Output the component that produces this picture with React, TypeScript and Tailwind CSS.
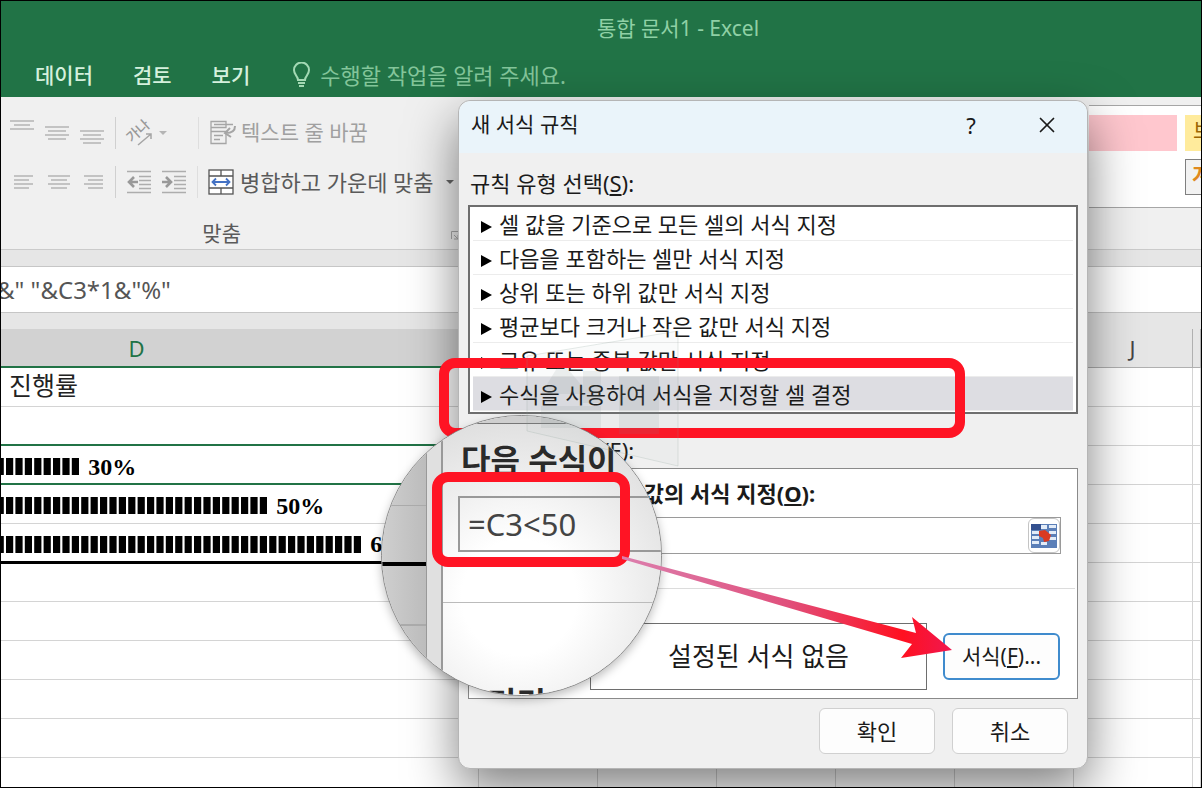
import type { ReactNode } from 'react';
import { X } from 'lucide-react';

const RULE_TYPES = [
  '셀 값을 기준으로 모든 셀의 서식 지정',
  '다음을 포함하는 셀만 서식 지정',
  '상위 또는 하위 값만 서식 지정',
  '평균보다 크거나 작은 값만 서식 지정',
  '고유 또는 중복 값만 서식 지정',
  '수식을 사용하여 서식을 지정할 셀 결정',
];

const TABS = ['데이터', '검토', '보기'];

const ROWS = [
  { label: '진행률', border: 'border-b border-b-[#d4d4d4]' },
  { border: 'border-b-2 border-b-[#217346]' },
  { bars: 8, text: '30%', border: 'border-b-2 border-b-[#217346]' },
  { bars: 28, text: '50%', border: 'border-b border-b-[#d4d4d4]' },
  { bars: 38, text: '60%', border: 'border-b-3 border-b-black' },
  { border: 'border-b border-b-[#d4d4d4]' },
  { border: 'border-b border-b-[#d4d4d4]' },
  { border: 'border-b border-b-[#d4d4d4]' },
  { border: 'border-b border-b-[#d4d4d4]' },
  { border: 'border-b border-b-[#d4d4d4]' },
  { border: '' },
];

const COLUMNS = ['E', 'F', 'G', 'H', 'I', 'J', ''];

function Lines({ rows, className }: { rows: [number, number, number][]; className?: string }) {
  return (
    <svg width="26" height="24" viewBox="0 0 26 24" className={className} stroke="#aaa" strokeWidth="1.3">
      {rows.map(([x1, x2, y]) => (
        <line key={y} x1={x1} x2={x2} y1={y} y2={y} />
      ))}
    </svg>
  );
}

function IconButton({ label, children }: { label: string; children: ReactNode }) {
  return (
    <button aria-label={label} className="flex shrink-0 items-center">
      {children}
    </button>
  );
}

function Indent({ flip }: { flip?: boolean }) {
  return (
    <svg width="26" height="24" viewBox="0 0 26 24" fill="none" stroke="#adadad" strokeWidth="1.3">
      <path d="M1 1.500h24M13 6.500h12M13 10.500h12M13 14.500h12M13 18.500h12M1 22.500h24" />
      {flip ? (
        <path d="M1 12h9M5 7l5 5-5 5" stroke="#999" strokeWidth="2.6" />
      ) : (
        <path d="M12 12H3M8 7l-5 5 5 5" stroke="#999" strokeWidth="2.6" />
      )}
    </svg>
  );
}

function Orientation() {
  return (
    <svg width="40" height="28" viewBox="0 0 40 28" fill="none" stroke="#a5a5a5" className="overflow-visible">
      <text x="12" y="17" transform="rotate(-42 12 12)" textAnchor="middle" fontSize="14" fontWeight="500" fill="#999" stroke="none">가나</text>
      <path d="M12 26L25 15M20 15h5v5" strokeWidth="1.5" />
      <path d="M33 12h8l-4 4z" fill="#b5b5b5" stroke="none" />
    </svg>
  );
}

function WrapIcon() {
  return (
    <svg width="28" height="26" viewBox="0 0 28 26" fill="none" stroke="#a5a5a5" strokeWidth="1.3">
      <path d="M2 1.500h15v6H2zM2 11.500h15v12H2zM2 7v5M5 4.500h19M5 15.500h9M5 19.500h6" />
      <path d="M26 6c0 5-3 7-9 7M21 8l-5 5 6 4" strokeWidth="2" />
    </svg>
  );
}

function MergeIcon() {
  return (
    <svg width="26" height="26" viewBox="0 0 26 26" fill="none" stroke="#555" strokeWidth="1.3">
      <rect x="1" y="1" width="24" height="24" fill="#fff" />
      <path d="M1 7h24M1 19h24M13 1v6M13 19v6" />
      <path d="M4 13h18M8 9.500L4.500 13 8 16.500M18 9.500l3.500 3.500-3.500 3.500" stroke="#4472c4" strokeWidth="1.8" />
    </svg>
  );
}

function Ribbon() {
  return (
    <section className="flex h-[153px] shrink-0 border-b border-[#cbcbcb] bg-[#f0f0f0]">
      <div className="flex w-[458px] shrink-0 flex-col text-[#5a5a5a]">
        <div className="flex h-[71px] items-center pl-2">
          <div className="flex gap-[9px]">
            <IconButton label="위쪽 맞춤">
              <Lines rows={[[1, 25, 6], [5, 21, 10], [1, 25, 14]]} className="mb-3" />
            </IconButton>
            <IconButton label="가운데 맞춤">
              <Lines rows={[[1, 25, 6], [4, 22, 10], [1, 25, 14], [4, 22, 18]]} />
            </IconButton>
            <IconButton label="아래쪽 맞춤">
              <Lines rows={[[1, 25, 6], [4, 22, 10], [1, 25, 14], [4, 22, 18]]} className="mt-2" />
            </IconButton>
          </div>
          <div className="ml-2.5 h-8 w-px bg-[#d0d0d0]" />
          <div className="ml-2.5">
            <IconButton label="방향"><Orientation /></IconButton>
          </div>
          <div className="ml-8 h-8 w-px bg-[#dedede]" />
          <button className="ml-2.5 flex items-center gap-1 text-[21px] text-[#a0a0a0]">
            <WrapIcon />텍스트 줄 바꿈
          </button>
        </div>
        <div className="flex h-7 items-center pl-3">
          <div className="flex gap-[9px]">
            <IconButton label="왼쪽 맞춤">
              <Lines rows={[[1, 20, 6], [1, 16, 10], [1, 20, 14], [1, 16, 18]]} />
            </IconButton>
            <IconButton label="중앙 맞춤">
              <Lines rows={[[0, 22, 6], [3, 19, 10], [0, 22, 14], [3, 19, 18]]} />
            </IconButton>
            <IconButton label="오른쪽 맞춤">
              <Lines rows={[[1, 20, 6], [5, 20, 10], [1, 20, 14], [5, 20, 18]]} />
            </IconButton>
          </div>
          <div className="ml-1.5 h-8 w-px bg-[#d0d0d0]" />
          <div className="ml-2.5 flex gap-[9px]">
            <IconButton label="내어쓰기"><Indent /></IconButton>
            <IconButton label="들여쓰기"><Indent flip /></IconButton>
          </div>
          <div className="ml-2.5 h-8 w-px bg-[#dedede]" />
          <button className="ml-2.5 flex items-center gap-1.5 text-[22px] whitespace-nowrap">
            <MergeIcon />병합하고 가운데 맞춤
            <svg width="8" height="4" viewBox="0 0 8 4" className="ml-1.5"><path d="M0 0h8L4 4z" fill="#666" /></svg>
          </button>
        </div>
        <div className="flex flex-1 items-end justify-end gap-[210px] pb-1">
          <span className="text-[21px] leading-6">맞춤</span>
          <svg width="8" height="10" viewBox="0 0 8 10" className="mb-1" fill="none" stroke="#aaa">
            <path d="M0.500 8V0.500H8M3 4l4 4M7 4v4H3" />
          </svg>
        </div>
      </div>
      <div className="mt-2 ml-auto flex h-[103px] w-28 flex-col gap-2 overflow-hidden border-y border-[#a6a6a6] bg-white pt-[9px]">
        <div className="flex gap-2">
          <div className="h-9 w-[88px] shrink-0 bg-[#ffc7ce]" />
          <div className="h-9 w-16 shrink-0 overflow-hidden bg-[#ffeb9c] pl-2 text-[21px] text-[#9c6500]">보통</div>
        </div>
        <div className="ml-24 h-9 w-16 overflow-hidden border border-[#7f7f7f] bg-[#f2f2f2] pl-1.5 text-[22px] leading-7 font-bold text-[#e08a1e]">계산</div>
      </div>
    </section>
  );
}

function Sheet() {
  return (
    <table className="w-full table-fixed border-collapse">
      <colgroup>
        <col className="w-[477px]" />
        {COLUMNS.slice(0, 6).map((c) => <col key={c} className="w-[119px]" />)}
        <col />
      </colgroup>
      <thead>
        <tr className="h-[38px] text-[22px] leading-7">
          <th className="border-b-2 border-[#217346] bg-[#d2d2d2] pr-[206px] font-normal text-[#217346]">D</th>
          {COLUMNS.map((c) => (
            <th key={c} className="border-r border-b border-[#b0b0b0] bg-[#e6e6e6] font-normal text-[#444]">{c}</th>
          ))}
        </tr>
      </thead>
      <tbody className="bg-white">
        {ROWS.map((row, i) => (
          <tr key={i} className="h-[39px]">
            <td className={`border-r border-r-[#d4d4d4] p-0 ${row.border}`}>
              {row.label && <span className="block pb-1 pl-2 text-[25px] leading-8 text-[#222]">{row.label}</span>}
              {row.bars && (
                <div className="flex items-center gap-2 pt-1">
                  <svg width={row.bars * 9.4 + 4} height="17" aria-hidden="true">
                    {Array.from({ length: row.bars + 1 }, (_, n) => (
                      <rect key={n} x={n * 9.4 - 4.4} width="7.2" height="17" />
                    ))}
                  </svg>
                  <span className="font-['Liberation_Serif',serif] text-2xl leading-8 font-black">{row.text}</span>
                </div>
              )}
            </td>
            {COLUMNS.map((c) => <td key={c} className="border-r border-b border-[#d4d4d4]" />)}
          </tr>
        ))}
      </tbody>
    </table>
  );
}

function RuleDialog() {
  return (
    <div
      role="dialog"
      aria-label="새 서식 규칙"
      className="absolute top-[99px] left-[457px] w-[630px] rounded-xl border border-[#b5b5b5] bg-[#f0f0f0] pb-3.5 text-[22px] text-[#1a1a1a] shadow-[0_20px_50px_0_rgba(0,0,0,0.5)]"
    >
      <header className="flex h-[52px] items-center rounded-t-xl bg-[#eaf4fa] pr-6 pb-1 pl-3">
        <h1 className="mr-auto text-[21px]">새 서식 규칙</h1>
        <button aria-label="도움말" className="mr-11 w-8">?</button>
        <button aria-label="닫기" className="flex w-8 justify-center"><X size={26} strokeWidth={1.6} /></button>
      </header>

      <div className="px-[9px]">
        <p id="rule-type" className="mt-3.5 mb-1.5 pl-0.5 leading-8">규칙 유형 선택(<u>S</u>):</p>
        <ul role="listbox" aria-labelledby="rule-type" className="border-2 border-[#6e6e6e] bg-white px-[3px] pb-px">
          {RULE_TYPES.map((rule, i) => (
            <li
              key={rule}
              role="option"
              aria-selected={i === 5}
              className="flex h-[34px] items-center gap-[7px] border-b border-[#ececec] pt-0.5 pl-2 aria-selected:bg-[#dddde2]"
            >
              <svg width="11" height="12" viewBox="0 0 11 12" className="mt-1"><path d="M0 0l11 6-11 6z" /></svg>
              {rule}
            </li>
          ))}
        </ul>

        <p className="mt-5 mb-0.5 pl-0.5 leading-8">규칙 설명 편집(<u>E</u>):</p>
        <div className="border border-[#8a8a8a] bg-white">
          <div className="px-4 pt-2">
            <label htmlFor="formula" className="block leading-8 font-bold">다음 수식이 참인 값의 서식 지정(<u>O</u>):</label>
            <div className="mt-2 flex h-[37px] items-center border border-[#9a9a9a]">
              <input id="formula" className="min-w-0 flex-1 outline-none" />
              <button aria-label="범위 선택" className="flex h-[35px] w-8 items-center justify-center rounded-md border border-[#c4c4c4]">
                <svg width="26" height="24" viewBox="0 0 26 24">
                  <rect width="26" height="24" fill="#5b7fb8" />
                  <path d="M0 0h10v6H0z" fill="#33508f" />
                  <path d="M1 7h7v3H1zM1 12h7v3H1zM1 17h7v3H1zM10 1h6v4h-6zM18 1h7v3h-7zM10 18h6v3h-6zM18 7h7v3h-7zM18 13h7v3h-7z" fill="#e3ecf8" />
                  <path d="M8 7l6-1 6 5-2 6-5 1-1-4-4-2z" fill="#d93a22" />
                </svg>
              </button>
            </div>
          </div>
          <div className="mx-0.5 mt-[34px] h-px bg-[#dcdcdc]" />
          <div className="flex items-center justify-end gap-4 pt-[34px] pr-[17px] pb-2">
            <div className="flex h-[67px] w-[337px] items-center justify-center border border-[#6e6e6e] text-[26px]">설정된 서식 없음</div>
            <button className="h-[47px] w-[117px] rounded-md border-2 border-[#3f8bcd] bg-[#fdfdfd] text-[21px]">서식(<u>F</u>)...</button>
          </div>
        </div>
        <footer className="mt-[9px] flex justify-end gap-[17px] pr-2.5">
          <button className="h-[46px] w-[116px] rounded-md border border-[#d0d0d0] bg-[#fdfdfd]">확인</button>
          <button className="h-[46px] w-[116px] rounded-md border border-[#d0d0d0] bg-[#fdfdfd]">취소</button>
        </footer>
      </div>
    </div>
  );
}

function Magnifier() {
  return (
    <div className="absolute top-[414px] left-[380px] flex size-[281px] overflow-hidden rounded-full border border-[#8a8a8a] bg-[#f0f0f0] shadow-[0_4px_10px_rgba(0,0,0,0.25)]">
      <div className="flex w-[45px] shrink-0 flex-col border-r border-[#999] bg-linear-to-r from-[#cfcfcf] to-[#bcbcbc]">
        <div className="h-[90px] border-b border-[#aaa]" />
        <div className="h-[60px] border-b-4 border-black" />
        <div className="h-[60px] border-b-2 border-[#aaa]" />
      </div>
      <div className="w-4 shrink-0 border-r-2 border-[#999] bg-[#e0e0e0]" />
      <div className="flex-1 bg-[radial-gradient(circle_at_35%_65%,#ffffff_25%,#d2d2d2_100%)]">
        <div className="h-2 border-b border-[#777] bg-[#cfcfcf]" />
        <p className="mt-4 ml-[18px] text-[32px] leading-10 font-bold whitespace-nowrap text-[#2a2a2a]">다음 수식이</p>
        <div className="mt-4 ml-[15px] flex h-14 items-center border-2 border-r-0 border-[#999] pl-2 text-[31px] text-[#444]">=C3&lt;50</div>
        <div className="mt-[50px] border-t border-[#bbb]" />
        <p className="mt-20 ml-11 text-[32px] leading-10 font-bold whitespace-nowrap text-[#2a2a2a]">미리 보기</p>
      </div>
    </div>
  );
}

function Watermark() {
  return (
    <svg className="pointer-events-none absolute top-[325px] left-[520px]" width="165" height="145" viewBox="0 0 165 145">
      <path d="M6 30L157 5v135L6 105z" fill="#8aa094" fillOpacity="0.04" stroke="#8aa094" strokeOpacity="0.22" />
      <path d="M98 50h40v58H98z" fill="#7f8f88" fillOpacity="0.12" />
      <path d="M20 68l16-26h10l22 26zM62 45h18v32H62zM20 80h60v22H20z" fill="#7f8f88" fillOpacity="0.12" />
    </svg>
  );
}

function Arrow() {
  return (
    <svg className="pointer-events-none absolute top-[549px] left-[614px]" width="345" height="115" viewBox="0 0 345 115">
      <defs>
        <linearGradient id="arrow" x1="0" x2="1">
          <stop offset="0" stopColor="#dc7fae" />
          <stop offset="0.5" stopColor="#e0507c" />
          <stop offset="0.85" stopColor="#ff1020" />
          <stop offset="1" stopColor="#f01850" />
        </linearGradient>
      </defs>
      <path d="M7 6L301 83 297 67 337 100 286 108 297 94 7 9z" fill="url(#arrow)" />
    </svg>
  );
}

export default function App() {
  return (
    <main className="relative min-h-screen overflow-hidden border border-black bg-[#e6e6e6] font-['Noto_Sans','Noto_Sans_CJK_KR',sans-serif]">
      <div className="flex h-[786px] flex-col overflow-hidden">
        <header className="h-24 shrink-0 bg-[#217346]">
          <div className="flex h-14 items-center justify-center pl-[154px] text-[21px] text-[#8fd0a5]">통합 문서1 - Excel</div>
          <nav className="flex items-center gap-10 pl-[34px] text-[21px] leading-9 text-[#d5f0dd]">
            {TABS.map((tab) => <button key={tab} className="font-medium">{tab}</button>)}
            <label className="flex flex-1 items-center gap-2 text-[#8fd0a5]">
              <svg width="22" height="26" viewBox="-2 0 22 26" fill="none" stroke="#a3d9b4" strokeWidth="2">
                <path d="M6 18c0-4-4-5-4-10a7.500 7.500 0 0 1 15 0c0 5-4 6-4 10zM6 21h7M7 24h5" />
              </svg>
              <input
                aria-label="검색"
                placeholder="수행할 작업을 알려 주세요."
                className="flex-1 bg-transparent text-[22px] outline-none placeholder:text-[#83c59a]"
              />
            </label>
          </nav>
        </header>
        <Ribbon />
        <div className="h-4 shrink-0" />
        <div className="flex h-[47px] shrink-0 items-center border-y border-[#c6c6c6] bg-white text-2xl whitespace-pre text-[#555]">
          <span className="-ml-1">&amp;" "&amp;C3*1&amp;"%"</span>
        </div>
        <div className="h-4 shrink-0" />
        <Sheet />
      </div>
      <RuleDialog />
      <div className="absolute top-[357px] left-[438px] h-20 w-[526px] rounded-2xl border-10 border-[#ff1424]" />
      <Magnifier />
      <div className="absolute top-[471px] left-[431px] h-[95px] w-[198px] rounded-2xl border-10 border-[#ff1424]" />
      <Watermark />
      <Arrow />
    </main>
  );
}
